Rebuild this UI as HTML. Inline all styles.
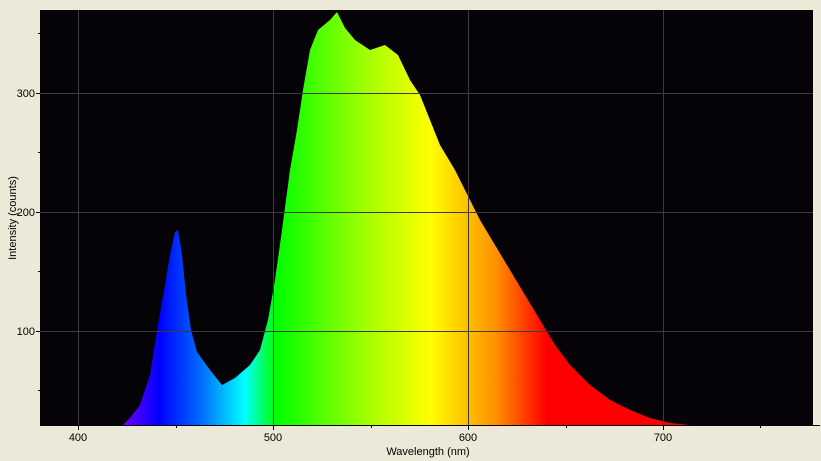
<!DOCTYPE html>
<html><head><style>
html,body{margin:0;padding:0;background:#ECE9D8;width:821px;height:461px;overflow:hidden}
svg{display:block}
text{font-family:"Liberation Sans",sans-serif;font-size:11px;fill:#000}
</style></head><body>
<svg width="821" height="461" viewBox="0 0 821 461">
<defs>
<linearGradient id="g" gradientUnits="userSpaceOnUse" x1="40" y1="0" x2="813" y2="0">
<stop offset="0.107" stop-color="#7000ff"/>
<stop offset="0.155" stop-color="#0000ff"/>
<stop offset="0.21" stop-color="#0070ff"/>
<stop offset="0.265" stop-color="#00ffff"/>
<stop offset="0.305" stop-color="#00ff00"/>
<stop offset="0.42" stop-color="#a0ff00"/>
<stop offset="0.505" stop-color="#ffff00"/>
<stop offset="0.59" stop-color="#ff9000"/>
<stop offset="0.655" stop-color="#ff0000"/>
<stop offset="1" stop-color="#ff0000"/>
</linearGradient>
</defs>
<rect x="40" y="10" width="773" height="415" fill="#050307"/>
<polygon fill="url(#g)" points="123,425 130,418 140,405 150,375 158,325 165,285 170,255 175,232 178,230 182,255 186,295 191,330 197,352 210,370 222,385 235,378 250,365 260,350 268,320 275,280 282,230 290,170 297,130 303,90 310,50 318,30 330,20 337,12 345,28 355,40 370,50 385,45 398,55 410,80 420,95 430,120 440,145 455,170 470,200 480,220 495,245 510,270 525,295 540,320 555,345 570,365 590,385 610,400 630,410 650,418 670,423 690,425"/>
<g stroke="#3c3c3c" stroke-width="1">
<line x1="78.5" y1="10" x2="78.5" y2="425"/>
<line x1="273.5" y1="10" x2="273.5" y2="425"/>
<line x1="468.5" y1="10" x2="468.5" y2="425"/>
<line x1="663.5" y1="10" x2="663.5" y2="425"/>
<line x1="40" y1="93.5" x2="813" y2="93.5"/>
<line x1="40" y1="212.5" x2="813" y2="212.5"/>
<line x1="40" y1="331.5" x2="813" y2="331.5"/>
</g>
<g stroke="#000" stroke-width="1">
<line x1="40" y1="425.5" x2="820" y2="425.5"/>
<line x1="78.5" y1="425" x2="78.5" y2="430"/>
<line x1="273.5" y1="425" x2="273.5" y2="430"/>
<line x1="468.5" y1="425" x2="468.5" y2="430"/>
<line x1="663.5" y1="425" x2="663.5" y2="430"/>
<line x1="176.5" y1="425" x2="176.5" y2="428"/>
<line x1="371.5" y1="425" x2="371.5" y2="428"/>
<line x1="566.5" y1="425" x2="566.5" y2="428"/>
<line x1="760.5" y1="425" x2="760.5" y2="428"/>
<line x1="36" y1="93.5" x2="40" y2="93.5"/>
<line x1="36" y1="212.5" x2="40" y2="212.5"/>
<line x1="36" y1="331.5" x2="40" y2="331.5"/>
<line x1="38" y1="33.5" x2="40" y2="33.5"/>
<line x1="38" y1="152.5" x2="40" y2="152.5"/>
<line x1="38" y1="271.5" x2="40" y2="271.5"/>
<line x1="38" y1="390.5" x2="40" y2="390.5"/>
</g>
<text x="78" y="441" text-anchor="middle">400</text>
<text x="273" y="441" text-anchor="middle">500</text>
<text x="468" y="441" text-anchor="middle">600</text>
<text x="663" y="441" text-anchor="middle">700</text>
<text x="35" y="97" text-anchor="end">300</text>
<text x="35" y="216" text-anchor="end">200</text>
<text x="35" y="335" text-anchor="end">100</text>
<text x="428" y="455" text-anchor="middle">Wavelength (nm)</text>
<text x="0" y="0" text-anchor="middle" transform="translate(16,218) rotate(-90)">Intensity (counts)</text>
</svg>
</body></html>
